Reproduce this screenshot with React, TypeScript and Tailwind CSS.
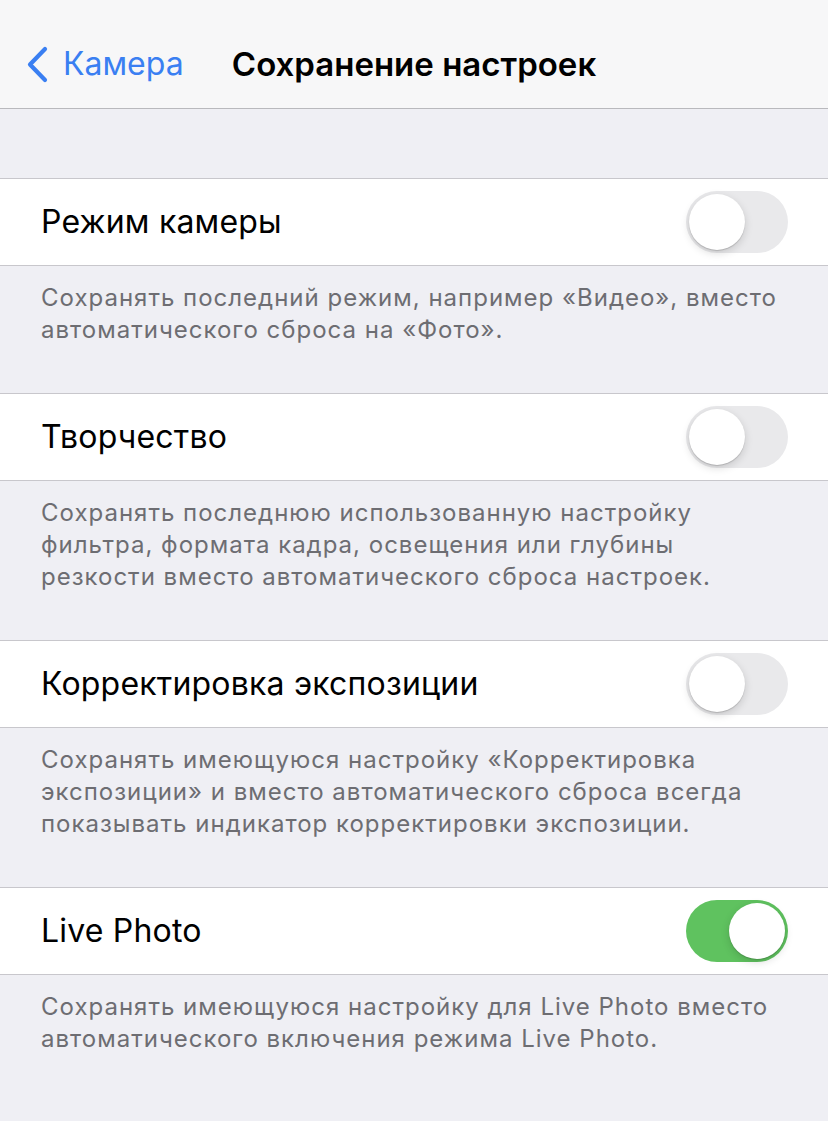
const rows = [
  {
    title: "Режим камеры",
    on: false,
    note: [
      "Сохранять последний режим, например «Видео», вместо",
      "автоматического сброса на «Фото».",
    ],
  },
  {
    title: "Творчество",
    on: false,
    note: [
      "Сохранять последнюю использованную настройку",
      "фильтра, формата кадра, освещения или глубины",
      "резкости вместо автоматического сброса настроек.",
    ],
  },
  {
    title: "Корректировка экспозиции",
    on: false,
    note: [
      "Сохранять имеющуюся настройку «Корректировка",
      "экспозиции» и вместо автоматического сброса всегда",
      "показывать индикатор корректировки экспозиции.",
    ],
  },
  {
    title: "Live Photo",
    on: true,
    note: [
      "Сохранять имеющуюся настройку для Live Photo вместо",
      "автоматического включения режима Live Photo.",
    ],
  },
];

function Toggle({ on }: { on: boolean }) {
  return (
    <div
      className={[
        "flex h-[62px] w-[102px] items-center rounded-full p-[3px]",
        on ? "justify-end bg-[#5fc25f]" : "justify-start bg-[#e9e9eb]",
      ].join(" ")}
    >
      <div className="h-[56px] w-[56px] rounded-full bg-white shadow-[0_3px_8px_rgba(0,0,0,0.15),0_1px_1px_rgba(0,0,0,0.16)]" />
    </div>
  );
}

export default function App() {
  return (
    <div className="min-h-[1121px] bg-[#efeff4] font-['Inter','Noto_Sans',sans-serif]">
      {/* Navigation bar */}
      <div className="grid h-[109px] grid-cols-[1fr_auto_1fr] items-center border-b border-[#b9b9bd] bg-[#f7f7f8] pt-[20px]">
        <div className="flex items-center pl-[25px] text-[#3a7ff2]">
          <svg width="24" height="37" viewBox="0 0 24 37" fill="none" aria-hidden="true">
            <path d="M20 3 L5 18.5 L20 34" stroke="currentColor" strokeWidth="4.2" strokeLinecap="round" strokeLinejoin="round" />
          </svg>
          <span className="ml-[14px] text-[32px] leading-none">Камера</span>
        </div>
        <div className="text-[33px] font-semibold leading-none text-black">
          Сохранение настроек
        </div>
        <div />
      </div>

      <div className="h-[69px]" />

      {rows.map((row) => (
        <div key={row.title}>
          <div className="flex h-[88px] items-center justify-between border-y border-[#c8c7cc] bg-white pl-[41px] pr-[40px]">
            <span className="text-[32px] leading-none tracking-[0.2px] text-black">{row.title}</span>
            <Toggle on={row.on} />
          </div>
          <div className="pb-[47px] pl-[41px] pt-[16px] text-[24px] leading-[32px] tracking-[1px] text-[#6d6d72]">
            {row.note.map((line) => (
              <div key={line} className="whitespace-nowrap">
                {line}
              </div>
            ))}
          </div>
        </div>
      ))}
    </div>
  );
}
